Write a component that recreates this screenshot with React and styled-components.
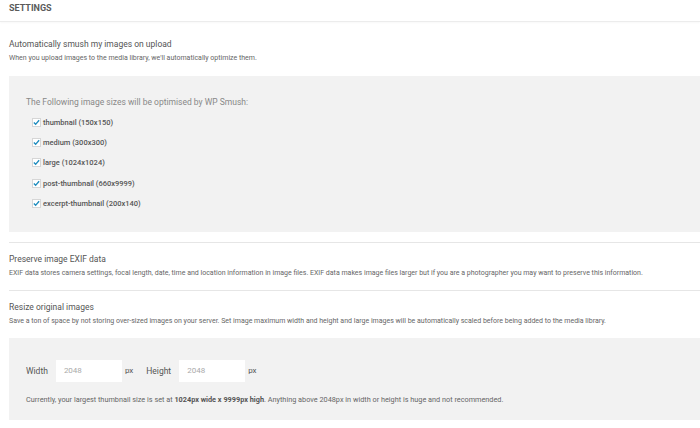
import React from 'react';
import styled, { createGlobalStyle } from 'styled-components';

const GlobalStyle = createGlobalStyle`
    html, body {
        margin: 0;
        padding: 0;
        background: #ffffff;
        font-family: Roboto, "Liberation Sans", sans-serif;
    }
`

const sizes = [
    'thumbnail (150x150)',
    'medium (300x300)',
    'large (1024x1024)',
    'post-thumbnail (660x9999)',
    'excerpt-thumbnail (200x140)',
];

export default function App() {
    return (
        <Page>
            <GlobalStyle />
            <Header>Settings</Header>

            <Section>
                <Title>Automatically smush my images on upload</Title>
                <Desc>When you upload images to the media library, we'll automatically optimize them.</Desc>
            </Section>

            <GrayBox $pad="20px 0 23px 17px">
                <BoxLead>The Following image sizes will be optimised by WP Smush:</BoxLead>
                <List>
                    {sizes.map((size) => (
                        <Item key={size}>
                            <Check>
                                <svg width="8" height="7" viewBox="0 0 8 7">
                                    <path d="M1 3.6 L3 5.6 L7 1" fill="none" stroke="#1e8cbe" strokeWidth="1.6" />
                                </svg>
                            </Check>
                            <span>{size}</span>
                        </Item>
                    ))}
                </List>
            </GrayBox>

            <Section $divided>
                <Title>Preserve image EXIF data</Title>
                <Desc>EXIF data stores camera settings, focal length, date, time and location information in image files. EXIF data makes image files larger but if you are a photographer you may want to preserve this information.</Desc>
            </Section>

            <Section $divided>
                <Title>Resize original images</Title>
                <Desc>Save a ton of space by not storing over-sized images on your server. Set image maximum width and height and large images will be automatically scaled before being added to the media library.</Desc>
            </Section>

            <GrayBox $pad="22px 0 15px 17px">
                <Fields>
                    <FieldLabel>Width</FieldLabel>
                    <Input defaultValue="2048" />
                    <Unit>px</Unit>
                    <FieldLabel>Height</FieldLabel>
                    <Input defaultValue="2048" />
                    <Unit>px</Unit>
                </Fields>
                <Note>
                    Currently, your largest thumbnail size is set at <b>1024px wide x 9999px high</b>. Anything above 2048px in width or height is huge and not recommended.
                </Note>
            </GrayBox>
        </Page>
    )
}

const Page = styled.div`
    width: 700px;
    height: 428px;
    overflow: hidden;
    background: #fff;
`

const Header = styled.div`
    height: 22px;
    box-sizing: border-box;
    padding: 3px 0 0 9px;
    font-size: 9px;
    font-weight: 700;
    text-transform: uppercase;
    color: #5a5a5a;
    border-bottom: 1px solid #ececec;
    box-shadow: 0 1px 2px rgba(0, 0, 0, 0.03);
`

const Section = styled.div`
    margin-left: 9px;
    padding: ${(p) => (p.$divided ? '9px 0 12px' : '15px 0 13px')};
    border-top: ${(p) => (p.$divided ? '1px solid #e6e6e6' : 'none')};
`

const Title = styled.div`
    font-size: 8.5px;
    color: #555;
    line-height: 14px;
`

const Desc = styled.div`
    margin-top: 2px;
    font-size: 7px;
    color: #666;
    line-height: 10px;
    white-space: nowrap;
`

const GrayBox = styled.div`
    margin: 0 0 10px 9px;
    background: #f2f2f2;
    padding: ${(p) => p.$pad};
`

const BoxLead = styled.div`
    font-size: 8.5px;
    color: #888;
    line-height: 12px;
`

const List = styled.div`
    margin: 9px 0 0 6px;
    display: flex;
    flex-direction: column;
    gap: 9.2px;
`

const Item = styled.div`
    display: flex;
    align-items: center;
    gap: 2px;
    height: 11px;
    font-size: 7.5px;
    font-weight: 500;
    color: #555;
`

const Check = styled.span`
    width: 9px;
    height: 9px;
    box-sizing: border-box;
    background: #fff;
    border: 1px solid #d6d6d6;
    display: flex;
    align-items: center;
    justify-content: center;
`

const Fields = styled.div`
    display: flex;
    align-items: center;
    height: 22px;
`

const FieldLabel = styled.span`
    font-size: 8.5px;
    color: #555;
    margin-right: 8px;
`

const Input = styled.input`
    width: 66px;
    height: 22px;
    box-sizing: border-box;
    border: none;
    outline: none;
    background: #fff;
    padding: 0 8px;
    font-family: Roboto, "Liberation Sans", sans-serif;
    font-size: 8px;
    color: #aaa;
`

const Unit = styled.span`
    font-size: 8px;
    color: #555;
    margin: 0 13px 0 3px;
`

const Note = styled.div`
    margin-top: 13px;
    font-size: 7.3px;
    color: #666;
    line-height: 10px;
    b {
        color: #555;
    }
`
